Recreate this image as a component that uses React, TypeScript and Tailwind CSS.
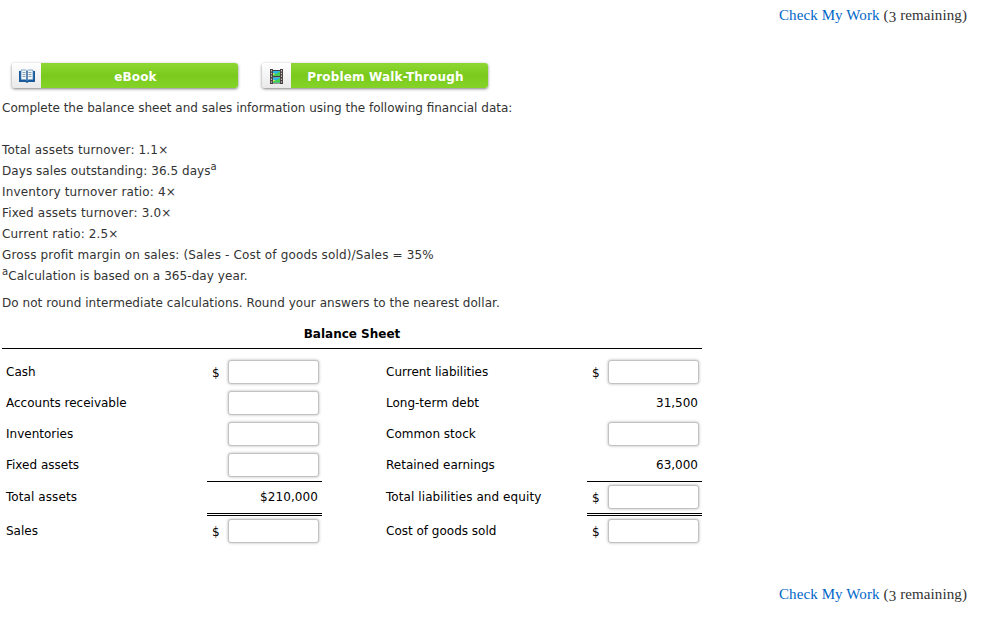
import type { ReactNode } from 'react';

type Cell = { kind: 'input'; dollar?: boolean } | { kind: 'value'; text: string };

interface Row {
  left: string;
  leftCell: Cell;
  right: string;
  rightCell: Cell;
  total?: boolean;
}

const rows: Row[] = [
  { left: 'Cash', leftCell: { kind: 'input', dollar: true }, right: 'Current liabilities', rightCell: { kind: 'input', dollar: true } },
  { left: 'Accounts receivable', leftCell: { kind: 'input' }, right: 'Long-term debt', rightCell: { kind: 'value', text: '31,500' } },
  { left: 'Inventories', leftCell: { kind: 'input' }, right: 'Common stock', rightCell: { kind: 'input' } },
  { left: 'Fixed assets', leftCell: { kind: 'input' }, right: 'Retained earnings', rightCell: { kind: 'value', text: '63,000' } },
  { left: 'Total assets', leftCell: { kind: 'value', text: '$210,000' }, right: 'Total liabilities and equity', rightCell: { kind: 'input', dollar: true }, total: true },
  { left: 'Sales', leftCell: { kind: 'input', dollar: true }, right: 'Cost of goods sold', rightCell: { kind: 'input', dollar: true } },
];

function CheckMyWork() {
  return (
    <div className="flex h-[30px] items-center justify-end pr-[18px] font-['Liberation_Serif',serif] text-[15px] tracking-[0.1px] text-[#333]">
      <a href="#" className="mr-1 text-[#0066c8]">Check My Work</a>
      <span className="leading-5">(<span className="align-[-2px] leading-none">3</span> remaining)</span>
    </div>
  );
}

function BookIcon() {
  return (
    <svg width="16" height="14" viewBox="0 0 16 14">
      <path d="M0 2h2v9h5l1 1 1-1h5V2h2v11H9.500l-1.500 1-1.500-1H0z" fill="#17599b" />
      <path d="M2 1h4.500L8 2v9.500L6.500 10.500H2zM14 1H9.500L8 2v9.500l1.500-1H14z" fill="#f2f7fb" stroke="#4f86b8" strokeWidth=".7" />
      <path d="M3.500 3.500h3M3.500 5.500h3M3.500 7.500h3M9.500 3.500h3M9.500 5.500h3M9.500 7.500h3" stroke="#8293a5" strokeWidth=".9" />
      <path d="M8 2v10" stroke="#245c91" />
    </svg>
  );
}

function FilmIcon() {
  return (
    <svg width="13" height="15" viewBox="0 0 13 15">
      <path d="M0 0h3v15H0zM10 0h3v15h-3zM3 1h7v1H3zM3 7h7v1.500H3zM3 13.500h7v1H3z" fill="#44403f" />
      <path d="M1.500 1v14M11.500 1v14" stroke="#c9bcbc" strokeWidth="1.200" strokeDasharray="1.500 1.300" />
      <path d="M3 2h7v5H3zM3 8.500h7v5H3z" fill="#2fb4e8" />
      <path d="M3 4.500l3 .5 4-2.500V7H3zM3 11l3 .5L10 9v4.500H3z" fill="#45d24e" />
      <path d="M3 4l2.500 1L3 6zM3 10.500l2.500 1L3 12.500z" fill="#e6e75a" />
    </svg>
  );
}

function ToolButton({ icon, children }: { icon: ReactNode; children: ReactNode }) {
  return (
    <button className="flex h-[25px] w-[226px] overflow-hidden rounded-[3px] shadow-[0_1px_3px_rgba(0,0,0,0.5)]">
      <span className="flex h-full w-[29px] shrink-0 items-center justify-center bg-linear-to-b from-white to-[#e9e9e9] pt-px">
        {icon}
      </span>
      <span className="flex h-full grow items-center justify-center bg-linear-to-b from-[#8fd733] via-[#7aca1c] to-[#85d328] pr-2 pt-[3px] font-['DejaVu_Sans',sans-serif] text-[12px] font-bold tracking-[0.15px] text-white">
        {children}
      </span>
    </button>
  );
}

function AmountCell({ cell, total }: { cell: Cell; total?: boolean }) {
  return (
    <div
      className={`flex items-center justify-end pr-1 ${
        total ? 'h-[35px] border-t border-b-[3px] border-t-black border-b-black [border-bottom-style:double]' : 'h-[31px]'
      }`}
    >
      {cell.kind === 'value' ? (
        <span className="pb-[2px]">{cell.text}</span>
      ) : (
        <>
          {cell.dollar && <span className="mr-auto ml-[5px] pt-px">$</span>}
          <input
            type="text"
            className="mb-px h-6 w-[91px] -mr-px rounded-[3px] border border-[#c2c2c2] bg-white px-1 shadow-[0_0_3px_rgba(0,0,0,0.3)] outline-none"
          />
        </>
      )}
    </div>
  );
}

export default function App() {
  return (
    <div className="flex h-[622px] w-[985px] flex-col overflow-hidden bg-white font-['DejaVu_Sans',sans-serif] text-[12px] text-[#333]">
      <CheckMyWork />

      {/* Resources */}
      <div className="mt-[33px] ml-[12px] flex gap-[24px]">
        <ToolButton icon={<BookIcon />}>eBook</ToolButton>
        <ToolButton icon={<FilmIcon />}>Problem Walk-Through</ToolButton>
      </div>

      {/* Problem statement */}
      <div className="mt-[10px] ml-[2px] leading-[21px] whitespace-nowrap">
        <p>Complete the balance sheet and sales information using the following financial data:</p>
        <div className="mt-[21px] tracking-[0.16px]">
          <p>Total assets turnover: 1.1×</p>
          <p className="tracking-[0.06px]">Days sales outstanding: 36.5 days<sup className="top-[-5px] text-[10px]">a</sup></p>
          <p>Inventory turnover ratio: 4×</p>
          <p>Fixed assets turnover: 3.0×</p>
          <p>Current ratio: 2.5×</p>
          <p>Gross profit margin on sales: (Sales - Cost of goods sold)/Sales = 35%</p>
          <p className="tracking-[0.07px]"><sup className="top-[-5px] text-[10px]">a</sup>Calculation is based on a 365-day year.</p>
        </div>
        <p className="mt-[6px] tracking-[0.05px]">Do not round intermediate calculations. Round your answers to the nearest dollar.</p>
      </div>

      {/* Balance sheet */}
      <div className="mt-[6px] ml-[2px] w-[700px] text-black">
        <h2 className="h-[29px] border-b border-black pt-[5px] text-center leading-[18px] font-bold">Balance Sheet</h2>
        <div className="mt-2">
          {rows.map((row) => (
            <div
              key={row.left}
              className={`grid grid-cols-[205px_115px_60px_205px_115px] items-center ${row.total ? 'tracking-[0.08px]' : ''}`}
            >
              <span className={`pl-1 ${row.total ? 'pb-[4px]' : 'pb-[2px]'}`}>{row.left}</span>
              <AmountCell cell={row.leftCell} total={row.total} />
              <span />
              <span className={`pl-1 whitespace-nowrap ${row.total ? 'pb-[4px]' : 'pb-[2px]'}`}>{row.right}</span>
              <AmountCell cell={row.rightCell} total={row.total} />
            </div>
          ))}
        </div>
      </div>

      <div className="mt-8">
        <CheckMyWork />
      </div>
    </div>
  );
}
